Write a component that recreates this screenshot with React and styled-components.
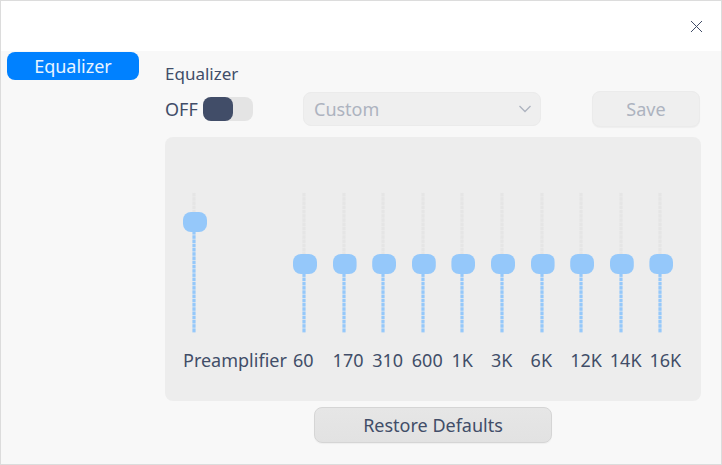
import React, { useState } from "react";
import styled, { createGlobalStyle } from "styled-components";

const ink = "#414d68";
const faded = "#adb3bf";
const pale = "#95c8fa";

const GlobalStyle = createGlobalStyle`
  *, *::before, *::after { box-sizing: border-box; }
  body {
    margin: 0;
    font-family: "Noto Sans", "Open Sans", sans-serif;
    font-size: 18px;
    line-height: 24px;
    color: ${ink};
  }
  button, select, input { font: inherit; color: inherit; margin: 0; }
`;

const Window = styled.div`
  display: flex;
  flex-direction: column;
  min-height: 100vh;
  background: #f8f8f8;
  border: 1px solid #dcdcdc;
`;

const TitleBar = styled.header`
  display: flex;
  justify-content: flex-end;
  height: 50px;
  background: #fff;
`;

const CloseButton = styled.button`
  display: grid;
  place-items: center;
  width: 50px;
  height: 50px;
  padding: 0;
  border: 0;
  background: none;
`;

const Body = styled.div`
  display: grid;
  grid-template-columns: 132px minmax(0, 1fr);
  column-gap: 26px;
  padding: 1px 20px 20px 6px;
`;

const NavItem = styled.button`
  width: 100%;
  height: 28px;
  padding: 0;
  border: 0;
  border-radius: 8px;
  background: #0081ff;
  color: #e8f4ff;
`;

const Main = styled.main`
  display: flex;
  flex-direction: column;
  padding-top: 10px;
`;

const Heading = styled.h1`
  margin: 0 0 5px;
  font-size: 17px;
  font-weight: 400;
  line-height: 24px;
`;

const Controls = styled.div`
  display: grid;
  grid-template-columns: 138px minmax(0, 1fr) 108px;
  align-items: center;
  margin-bottom: 10px;
  padding-right: 1px;
`;

const SwitchLabel = styled.label`
  display: flex;
  align-items: center;
  gap: 5px;
`;

const Switch = styled.input`
  appearance: none;
  width: 50px;
  height: 24px;
  border-radius: 8px;
  background: #e4e4e4;
  &::before {
    content: "";
    display: block;
    width: 30px;
    height: 24px;
    border-radius: 8px;
    background: ${ink};
  }
  &:checked::before {
    margin-left: auto;
    background: #0081ff;
  }
`;

const PresetField = styled.div`
  display: grid;
  align-items: center;
  margin-right: 51px;
  > * { grid-area: 1 / 1; }
  > svg { justify-self: end; margin-right: 10px; pointer-events: none; }
`;

const Preset = styled.select`
  appearance: none;
  width: 100%;
  height: 34px;
  padding: 0 30px 0 10px;
  border: 1px solid #ebebeb;
  border-radius: 8px;
  background: #efefef;
  &:disabled { color: ${faded}; opacity: 1; }
`;

const PushButton = styled.button`
  height: 36px;
  width: ${(p) => (p.$wide ? "238px" : "100%")};
  align-self: center;
  padding: 0;
  border: 1px solid #d5d5d5;
  border-radius: 8px;
  background: linear-gradient(#e6e6e6, #e2e2e2);
  box-shadow: 0 1px 1px #0000000a;
  &:disabled {
    color: ${faded};
    border-color: #ebebeb;
    background: #efefef;
  }
`;

const Panel = styled.section`
  display: grid;
  grid-template-columns: 110px repeat(10, minmax(0, 1fr));
  margin-bottom: 6px;
  padding: 47px 12px 29px 18px;
  border-radius: 8px;
  background: #ededed;
`;

const Band = styled.label`
  display: flex;
  flex-direction: column;
  align-items: flex-start;
  gap: 4px;
  white-space: nowrap;
`;

const Fader = styled.input`
  appearance: none;
  writing-mode: vertical-lr;
  direction: rtl;
  width: 24px;
  height: 160px;
  background:
    linear-gradient(to right, #ededed66 1px, transparent 1px 3px, #ededed66 3px) 9px 9px / 4px 140px no-repeat,
    linear-gradient(transparent 3px, #edededcc 3px) 9px 9px / 4px calc(140px / 33) repeat-y,
    linear-gradient(to top, ${pale} var(--level), #e5e5e5 var(--level)) 9px 9px / 4px 140px no-repeat;
  clip-path: inset(0);
  &::-webkit-slider-runnable-track {
    width: 24px;
    height: 160px;
    background: transparent;
  }
  &::-webkit-slider-thumb {
    appearance: none;
    width: 24px;
    height: 20px;
    border-radius: 8px;
    background: ${pale};
  }
`;

const initialBands = [
  ["Preamplifier", 12],
  ["60", 0],
  ["170", 0],
  ["310", 0],
  ["600", 0],
  ["1K", 0],
  ["3K", 0],
  ["6K", 0],
  ["12K", 0],
  ["14K", 0],
  ["16K", 0],
];

export default function App() {
  const [on, setOn] = useState(false);
  const [levels, setLevels] = useState(initialBands.map((b) => b[1]));
  const change = (i, v) => setLevels(levels.map((l, n) => (n === i ? v : l)));

  return (
    <>
      <GlobalStyle />
      <Window>
        <TitleBar>
          <CloseButton aria-label="Close">
            <svg width="12" height="12" viewBox="0 0 12 12" fill="none" stroke={ink} shapeRendering="crispEdges">
              <path d="M1 1l11 11M12 1L1 12" />
            </svg>
          </CloseButton>
        </TitleBar>
        <Body>
          <nav>
            <NavItem>Equalizer</NavItem>
          </nav>
          <Main>
            <Heading>Equalizer</Heading>
            <Controls>
              <SwitchLabel>
                {on ? "ON" : "OFF"}
                <Switch type="checkbox" role="switch" checked={on} onChange={() => setOn(!on)} />
              </SwitchLabel>
              <PresetField>
                <Preset aria-label="Preset" disabled={!on}>
                  <option>Custom</option>
                </Preset>
                <svg width="12" height="8" viewBox="0 0 12 8" fill="none" stroke={faded} strokeWidth="1.3">
                  <path d="M.5 1L6 6.5 11.5 1" />
                </svg>
              </PresetField>
              <PushButton disabled={!on}>Save</PushButton>
            </Controls>
            <Panel>
              {initialBands.map(([name], i) => (
                <Band key={name}>
                  <Fader
                    type="range"
                    min="-20"
                    max="20"
                    value={levels[i]}
                    disabled={!on}
                    onChange={(e) => change(i, Number(e.target.value))}
                    style={{ "--level": `${((levels[i] + 20) / 40) * 100}%` }}
                  />
                  {name}
                </Band>
              ))}
            </Panel>
            <PushButton
              $wide
              onClick={() => setLevels(initialBands.map((b) => b[1]))}
            >
              Restore Defaults
            </PushButton>
          </Main>
        </Body>
      </Window>
    </>
  );
}
